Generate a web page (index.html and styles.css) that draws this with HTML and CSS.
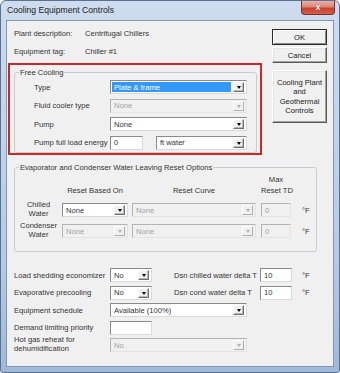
FILE: index.html
```html
<!DOCTYPE html>
<html>
<head>
<meta charset="utf-8">
<title>Cooling Equipment Controls</title>
<link rel="stylesheet" href="styles.css">
</head>
<body>
<div class="window">
  <div class="titlebar">
    <span class="title">Cooling Equipment Controls</span>
    <div class="close"><span>x</span></div>
  </div>
  <div class="client">
    <div class="top">
      <div class="leftcol">
        <div class="info"><span class="info-label">Plant description:</span><span>Centrifugal Chillers</span></div>
        <div class="info"><span class="info-label">Equipment tag:</span><span>Chiller #1</span></div>
        <div class="highlight">
          <fieldset class="group fc">
            <legend>Free Cooling</legend>
            <div class="fc-rows">
              <div class="row"><span class="fc-label">Type</span><div class="combo w137 selected"><span class="val">Plate &amp; frame</span><span class="drop"></span></div></div>
              <div class="row"><span class="fc-label">Fluid cooler type</span><div class="combo w137 disabled"><span class="val">None</span><span class="drop"></span></div></div>
              <div class="row"><span class="fc-label">Pump</span><div class="combo w137"><span class="val">None</span><span class="drop"></span></div></div>
              <div class="row"><span class="fc-label">Pump full load energy</span><div class="edit w33">0</div><div class="combo w91 ml13"><span class="val">ft water</span><span class="drop"></span></div></div>
            </div>
          </fieldset>
        </div>
      </div>
      <div class="buttons">
        <button class="btn default">OK</button>
        <button class="btn">Cancel</button>
        <button class="btn tall">Cooling Plant<br>and<br>Geothermal<br>Controls</button>
      </div>
    </div>

    <fieldset class="group evap">
      <legend>Evaporator and Condenser Water Leaving Reset Options</legend>
      <div class="evap-grid">
        <span></span>
        <span class="head w66">Reset Based On</span>
        <span class="head w124">Reset Curve</span>
        <span class="head w30">Max<br>Reset TD</span>
        <span></span>

        <span class="rowlabel">Chilled<br>Water</span>
        <div class="combo w66"><span class="val">None</span><span class="drop"></span></div>
        <div class="combo w124 disabled"><span class="val">None</span><span class="drop"></span></div>
        <div class="edit w30 disabled">0</div>
        <span class="unit">°F</span>

        <span class="rowlabel">Condenser<br>Water</span>
        <div class="combo w66 disabled"><span class="val">None</span><span class="drop"></span></div>
        <div class="combo w124 disabled"><span class="val">None</span><span class="drop"></span></div>
        <div class="edit w30 disabled">0</div>
        <span class="unit">°F</span>
      </div>
    </fieldset>

    <div class="bottom">
      <div class="row">
        <span class="lbl">Load shedding economizer</span>
        <div class="combo w42"><span class="val">No</span><span class="drop"></span></div>
        <span class="lbl2">Dsn chilled water delta T</span>
        <div class="edit w32">10</div>
        <span class="unit2">°F</span>
      </div>
      <div class="row">
        <span class="lbl">Evaporative precooling</span>
        <div class="combo w42"><span class="val">No</span><span class="drop"></span></div>
        <span class="lbl2">Dsn cond water delta T</span>
        <div class="edit w32">10</div>
        <span class="unit2">°F</span>
      </div>
      <div class="row">
        <span class="lbl">Equipment schedule</span>
        <div class="combo w137"><span class="val">Available (100%)</span><span class="drop"></span></div>
      </div>
      <div class="row">
        <span class="lbl">Demand limiting priority</span>
        <div class="edit w42"></div>
      </div>
      <div class="row">
        <span class="lbl twoline">Hot gas reheat for<br>dehumidification</span>
        <div class="combo w137 disabled"><span class="val">No</span><span class="drop"></span></div>
      </div>
    </div>
  </div>
</div>
</body>
</html>
```

FILE: styles.css
```css
html, body {
  margin: 0;
  padding: 0;
}
body {
  width: 340px;
  height: 373px;
  overflow: hidden;
  font-family: "Liberation Sans", Arial, sans-serif;
  font-size: 7.6px;
  color: #333;
  background: #fff;
}
.window {
  width: 340px;
  height: 373px;
  box-sizing: border-box;
  border: 1px solid #5b7190;
  border-radius: 6px 6px 3px 3px;
  padding: 0 5px 5px 5px;
  display: flex;
  flex-direction: column;
  background: linear-gradient(180deg, #cddcee 0%, #c3d5eb 30%, #b4cae5 70%, #9fb9db 100%);
}
.titlebar {
  height: 19px;
  flex: none;
  display: flex;
  align-items: flex-start;
}
.title {
  margin: 4px 0 0 1px;
  font-size: 8.6px;
  line-height: 11px;
  color: #222;
}
.close {
  margin-left: auto;
  margin-right: -1px;
  width: 34px;
  height: 14px;
  box-sizing: border-box;
  border: 1px solid #7d3026;
  border-top: none;
  border-radius: 0 0 4px 4px;
  background: linear-gradient(180deg, #ebb2a8 0%, #de8575 45%, #c8402c 55%, #d2604a 100%);
  display: flex;
  align-items: center;
  justify-content: center;
}
.close span {
  color: #fff;
  font-weight: bold;
  font-size: 9px;
  line-height: 10px;
  text-shadow: 0 0 1px #5a1a10;
  margin-top: -1px;
}
.client {
  flex: 1;
  background: #f0f0f0;
  border: 1px solid #8497b0;
  padding-top: 3px;
  display: flex;
  flex-direction: column;
}
.top {
  display: flex;
  flex: none;
}
.leftcol {
  width: 255px;
}
.info {
  height: 18px;
  display: flex;
  align-items: center;
  padding-left: 7px;
}
.info-label {
  width: 71px;
}
.highlight {
  margin: 3px 0 0 1px;
  width: 254px;
  height: 92px;
  box-sizing: border-box;
  border: 2px solid #c62a2f;
  padding: 1.5px 3px 0 4px;
}
fieldset.group {
  margin: 0;
  padding: 0;
  border: 1px solid #c9cdd2;
  border-radius: 3px;
  min-width: 0;
}
fieldset.group legend {
  margin-left: 4px;
  padding: 0 1px;
  line-height: 11px;
  white-space: nowrap;
}
fieldset.fc {
  height: 86.5px;
  box-sizing: border-box;
}
.fc-rows {
  margin: 2.5px 0 0 19px;
  display: flex;
  flex-direction: column;
  gap: 4.5px;
}
.row {
  display: flex;
  align-items: center;
  height: 14px;
}
.fc-label {
  width: 76px;
}
.combo {
  height: 14px;
  box-sizing: border-box;
  border: 1px solid;
  border-color: #8a8a8a #dadada #dadada #8a8a8a;
  background: #fff;
  display: flex;
  align-items: center;
  padding: 1px;
}
.combo .val {
  flex: 1;
  height: 100%;
  display: flex;
  align-items: center;
  padding-left: 2px;
  white-space: nowrap;
  overflow: hidden;
}
.combo.selected .val {
  background: #3399ff;
  color: #fff;
}
.combo .drop {
  width: 11px;
  height: 10px;
  box-sizing: border-box;
  margin-left: 2px;
  margin-right: 1px;
  background: #f0f0f0;
  border: 1px solid;
  border-color: #fff #6f6f6f #6f6f6f #fff;
  box-shadow: inset -1px -1px 0 #b8b8b8;
  display: flex;
  align-items: center;
  justify-content: center;
}
.combo .drop::after {
  content: "";
  width: 0;
  height: 0;
  border-left: 2.5px solid transparent;
  border-right: 2.5px solid transparent;
  border-top: 3px solid #000;
  margin-top: 1px;
}
.combo.disabled {
  background: #f0f0f0;
  border-color: #b4b4b4 #e4e4e4 #e4e4e4 #b4b4b4;
  color: #a2a2a2;
}
.combo.disabled .drop {
  border-color: #fff #b0b0b0 #b0b0b0 #fff;
  box-shadow: none;
}
.combo.disabled .drop::after {
  border-top-color: #b0b0b0;
}
.edit {
  height: 14px;
  box-sizing: border-box;
  border: 1px solid;
  border-color: #8a8a8a #dadada #dadada #8a8a8a;
  background: #fff;
  padding-left: 3px;
  display: flex;
  align-items: center;
}
.edit.disabled {
  background: #f0f0f0;
  border-color: #b4b4b4 #e4e4e4 #e4e4e4 #b4b4b4;
  color: #a2a2a2;
}
.w137 { width: 137px; }
.w124 { width: 124px; }
.w91 { width: 91px; }
.w66 { width: 66px; }
.w42 { width: 42px; }
.w33 { width: 33px; }
.w32 { width: 32px; }
.w30 { width: 30px; }
.ml13 { margin-left: 13px; }

.buttons {
  margin: 5px 0 0 10px;
  width: 55px;
  display: flex;
  flex-direction: column;
}
.btn {
  font: inherit;
  color: #222;
  height: 16px;
  box-sizing: border-box;
  margin: 0 0 2px 0;
  padding: 0;
  background: #f0f0f0;
  border: 1px solid;
  border-color: #fff #5a5a5a #5a5a5a #fff;
  box-shadow: inset -1px -1px 0 #a0a0a0, inset 1px 1px 0 #e6e6e6;
}
.btn.default {
  border-color: #2a2a2a;
  box-shadow: inset 1px 1px 0 #fff, inset -1px -1px 0 #8a8a8a;
}
.btn.tall {
  margin-top: 5px;
  height: 53px;
  line-height: 9.3px;
}

fieldset.evap {
  flex: none;
  margin: 6.5px 0 0 7px;
  width: 303px;
  box-sizing: border-box;
}
.evap-grid {
  margin-top: 2.5px;
  padding-bottom: 13px;
  display: grid;
  grid-template-columns: 47px 70px 129px 41px auto;
  grid-template-rows: 21px 14px 14px;
  row-gap: 7px;
  align-items: center;
}
.head {
  align-self: end;
  text-align: center;
  line-height: 10.5px;
  white-space: nowrap;
}
.rowlabel {
  text-align: center;
  line-height: 8.6px;
  white-space: nowrap;
}
.unit {
  padding-top: 1px;
}

.bottom {
  flex: none;
  margin: 16px 0 0 7px;
  display: flex;
  flex-direction: column;
  gap: 3.5px;
}
.lbl {
  width: 96px;
}
.lbl.twoline {
  line-height: 8.6px;
}
.lbl2 {
  margin-left: 22px;
  width: 86px;
}
.unit2 {
  margin-left: 10px;
}
```
